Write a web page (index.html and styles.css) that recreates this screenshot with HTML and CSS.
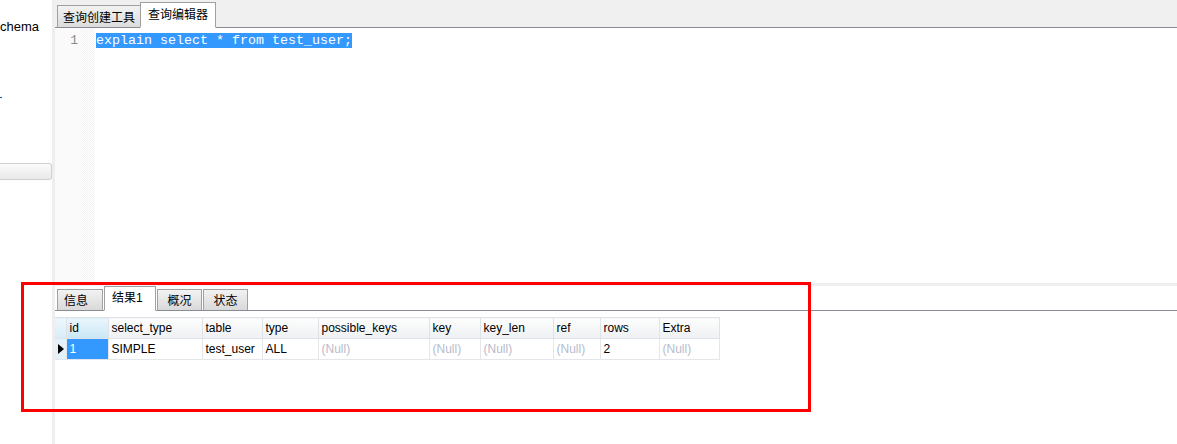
FILE: index.html
```html
<!DOCTYPE html>
<html lang="zh">
<head>
<meta charset="utf-8">
<link rel="stylesheet" href="styles.css">
</head>
<body>
<div class="app">
  <aside class="sidebar">
    <div class="schema">chema</div>
    <div class="mark"></div>
    <div class="sidebtn"></div>
  </aside>
  <main class="main">
    <div class="tabbar">
      <div class="tab">查询创建工具</div>
      <div class="tab active">查询编辑器</div>
    </div>
    <div class="editor">
      <div class="gutter"><span class="ln">1</span></div>
      <div class="fold"></div>
      <div class="code"><span class="sel">explain select * from test_user;</span></div>
    </div>
    <div class="splitter"></div>
    <div class="results">
      <div class="rtabs">
        <div class="rtab">信息</div>
        <div class="rtab active">结果1</div>
        <div class="rtab">概况</div>
        <div class="rtab">状态</div>
      </div>
      <table class="grid">
        <colgroup>
          <col class="c-ind"><col class="c-id"><col class="c-st"><col class="c-tb"><col class="c-ty"><col class="c-pk"><col class="c-k"><col class="c-kl"><col class="c-ref"><col class="c-rows"><col class="c-ex">
        </colgroup>
        <tr class="head">
          <th class="ind"></th><th class="hid">id</th><th>select_type</th><th>table</th><th>type</th><th>possible_keys</th><th>key</th><th>key_len</th><th>ref</th><th>rows</th><th>Extra</th>
        </tr>
        <tr class="row">
          <td class="ind"><span class="arrow"></span></td><td class="cur">1</td><td>SIMPLE</td><td>test_user</td><td>ALL</td><td class="null">(Null)</td><td class="null">(Null)</td><td class="null">(Null)</td><td class="null">(Null)</td><td>2</td><td class="null">(Null)</td>
        </tr>
      </table>
    </div>
  </main>
  <div class="highlight"></div>
</div>
</body>
</html>
```

FILE: styles.css
```css
* { box-sizing: border-box; }
html, body { margin: 0; padding: 0; background: #fff; }
body {
  font-family: "Liberation Sans", "Noto Sans CJK SC", sans-serif;
  font-size: 12px;
  color: #000;
  width: 1177px;
  height: 444px;
  overflow: hidden;
}
.app {
  position: relative;
  display: flex;
  height: 444px;
}
.sidebar {
  width: 55px;
  flex: none;
  border-right: 3px solid #eeeeee;
  background: #fff;
  overflow: hidden;
}
.schema {
  font-size: 13px;
  margin-top: 19px;
  line-height: 16px;
  white-space: nowrap;
}
.mark {
  width: 2px;
  height: 1px;
  background: #1a4fa0;
  margin-top: 62px;
}
.sidebtn {
  margin-top: 65px;
  width: 52px;
  height: 17px;
  border: 1px solid #cfcfcf;
  border-left: none;
  border-radius: 0 3px 3px 0;
  background: linear-gradient(#fbfbfb, #e9e9e9);
}
.main {
  flex: 1;
  display: flex;
  flex-direction: column;
  min-width: 0;
}
.tabbar {
  height: 28px;
  flex: none;
  background: #f0f0f0;
  border-bottom: 1px solid #898c95;
  display: flex;
  align-items: flex-end;
  padding-left: 2px;
}
.tab {
  height: 23px;
  margin-bottom: -1px;
  padding: 4px 5px 0;
  border: 1px solid #a0a0a0;
  border-bottom-color: #898c95;
  background: linear-gradient(#f2f2f2, #dcdcdc);
  line-height: 16px;
  white-space: nowrap;
}
.tab.active {
  height: 26px;
  padding: 4px 7px 0;
  background: #fff;
  border-color: #a0a0a0;
  border-bottom-color: #fff;
  margin-left: -1px;
}
.editor {
  height: 255px;
  flex: none;
  display: flex;
}
.gutter {
  width: 28px;
  background: #fafafa;
  text-align: right;
  padding: 5px 5px 0 0;
  font-family: "Liberation Mono", monospace;
  font-size: 13px;
  color: #8a8a8a;
  line-height: 15px;
}
.fold {
  width: 12px;
  background-color: #fff;
  background-image: repeating-conic-gradient(#f3f3f3 0 25%, #ffffff 0 50%);
  background-size: 2px 2px;
}
.code {
  flex: 1;
  padding: 5px 0 0 1px;
  font-family: "Liberation Mono", monospace;
  font-size: 13.33px;
  line-height: 15px;
  white-space: pre;
}
.sel {
  background: #3399ff;
  color: #fff;
  display: inline-block;
  height: 15px;
}
.splitter {
  height: 3px;
  flex: none;
  background: #f0f0f0;
}
.results {
  flex: 1;
  background: #fff;
}
.rtabs {
  height: 25px;
  border-bottom: 1px solid #898c95;
  display: flex;
  align-items: flex-end;
  padding-left: 2px;
  gap: 1px;
}
.rtab {
  height: 22px;
  margin-bottom: -1px;
  padding: 3px 0 0;
  width: 45px;
  text-align: center;
  border: 1px solid #a0a0a0;
  border-bottom-color: #898c95;
  background: linear-gradient(#f2f2f2, #d9d9d9);
  line-height: 16px;
  white-space: nowrap;
}
.rtab:first-child { width: 46px; text-align: left; padding-left: 6px; }
.rtab.active {
  width: 52px;
  height: 25px;
  padding-top: 3px;
  background: #fff;
  border-bottom-color: #fff;
  margin-left: 0;
  text-align: left;
  padding-left: 7px;
}
.grid {
  margin-top: 6px;
  border-collapse: collapse;
  table-layout: fixed;
  width: 664px;
}
.c-ind { width: 11px; }
.c-id { width: 42px; }
.c-st { width: 94px; }
.c-tb { width: 60px; }
.c-ty { width: 56px; }
.c-pk { width: 111px; }
.c-k { width: 51px; }
.c-kl { width: 73px; }
.c-ref { width: 47px; }
.c-rows { width: 59px; }
.c-ex { width: 60px; }
.grid th, .grid td {
  height: 21px;
  padding: 0 0 0 3px;
  text-align: left;
  font-weight: normal;
  white-space: nowrap;
  overflow: hidden;
  border: 1px solid #e4e6ea;
  line-height: 18px;
}
.grid .head th {
  background: linear-gradient(#fdfdfd, #eef0f3);
  border-color: #dfe2e6;
}
.grid .head th.hid {
  background: linear-gradient(#eaf6fc, #c9e7f7);
}
.grid .head th.ind {
  background: linear-gradient(#eef7fc, #d6ecf8);
  border-left: none;
}
.grid td.ind {
  background: #e3f1fa;
  padding: 0;
  border-left: none;
  position: relative;
}
.arrow {
  display: block;
  width: 0;
  height: 0;
  margin-left: 3px;
  border-top: 5px solid transparent;
  border-bottom: 5px solid transparent;
  border-left: 6px solid #000;
}
.grid td.cur {
  background: #3399ff;
  color: #fff;
}
.grid td.null { color: #b7bbcc; }
.highlight {
  position: absolute;
  left: 21px;
  top: 282px;
  width: 790px;
  height: 130px;
  border: 3px solid #ff0000;
  pointer-events: none;
}
```
